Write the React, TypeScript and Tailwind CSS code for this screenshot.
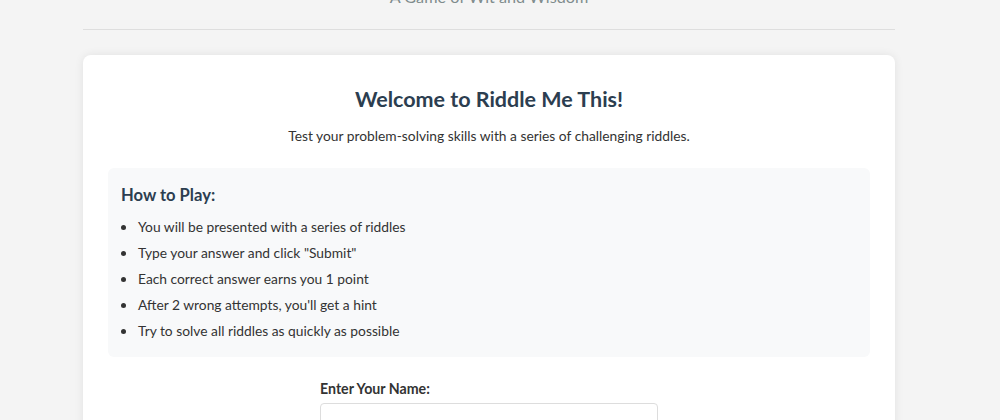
export default function App() {
  const rules = [
    "You will be presented with a series of riddles",
    'Type your answer and click "Submit"',
    "Each correct answer earns you 1 point",
    "After 2 wrong attempts, you'll get a hint",
    "Try to solve all riddles as quickly as possible",
  ];

  return (
    <div className="min-h-screen bg-[#f4f4f4] text-[#333] font-['Lato',sans-serif] overflow-hidden">
      <div className="w-[812px] ml-[83px] -mt-[15px]">
        {/* Header */}
        <header className="text-center pb-[20px] border-b border-[#dedede]">
          <p className="text-[16.2px] leading-[24px] text-[#7f8c8d]">A Game of Wit and Wisdom</p>
        </header>

        {/* Welcome card */}
        <main className="mt-[25px] bg-white rounded-lg shadow-[0_0_10px_rgba(0,0,0,0.08)] px-[25px] pt-[29px] pb-[25px]">
          <h2 className="text-center text-[21.5px] leading-[30px] font-bold text-[#2c3e50]">
            Welcome to Riddle Me This!
          </h2>
          <p className="text-center text-[13.8px] leading-[22px] mt-[11px]">
            Test your problem-solving skills with a series of challenging riddles.
          </p>

          <section className="mt-[21px] bg-[#f8f9fa] rounded-md px-[13px] pt-[15px] pb-[13px]">
            <h3 className="text-[16.6px] leading-[24px] font-bold text-[#2c3e50]">How to Play:</h3>
            <ul className="mt-[7px] pl-[16px] list-disc text-[13.8px] leading-[26px] marker:text-[#333]">
              {rules.map((r) => (
                <li key={r} className="pl-[1px]">
                  {r}
                </li>
              ))}
            </ul>
          </section>

          <div className="w-[338px] mx-auto mt-[21px]">
            <label className="block text-[14.2px] leading-[22px] font-bold">Enter Your Name:</label>
            <input
              type="text"
              className="mt-[3px] w-full h-[38px] border border-[#ddd] rounded-[4px] px-[10px]"
            />
          </div>
        </main>
      </div>
    </div>
  );
}
